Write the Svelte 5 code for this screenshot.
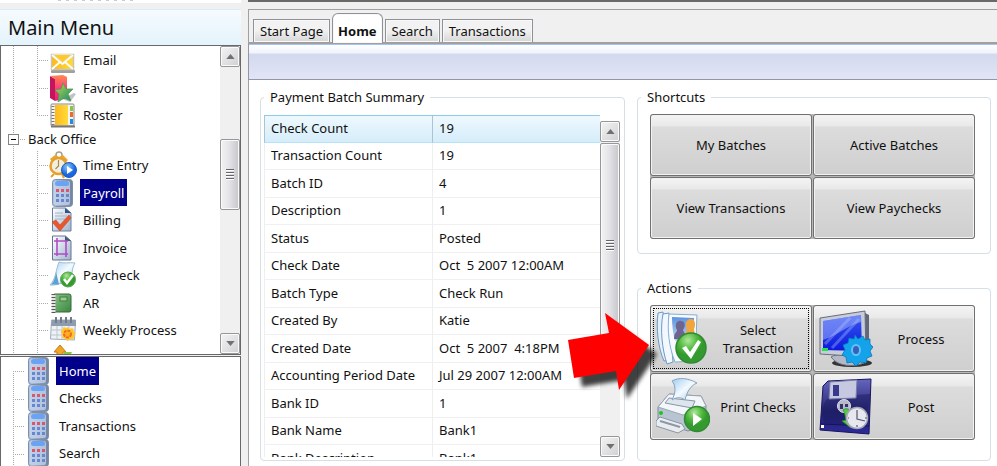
<script>
  let activeTab = $state('Home');
  let activeMenu = $state('Payroll');
  let activePage = $state('Home');

  const frontOffice = [
    { label: 'Email', icon: 'email' },
    { label: 'Favorites', icon: 'favorites' },
    { label: 'Roster', icon: 'roster' }
  ];

  const backOffice = [
    { label: 'Time Entry', icon: 'time' },
    { label: 'Payroll', icon: 'calc' },
    { label: 'Billing', icon: 'billing' },
    { label: 'Invoice', icon: 'invoice' },
    { label: 'Paycheck', icon: 'paycheck' },
    { label: 'AR', icon: 'ar' },
    { label: 'Weekly Process', icon: 'weekly' },
    { label: 'Import Export', icon: 'transfer' }
  ];

  const pages = ['Home', 'Checks', 'Transactions', 'Search'];
  const tabs = ['Start Page', 'Home', 'Search', 'Transactions'];

  const summary = [
    ['Check Count', '19'],
    ['Transaction Count', '19'],
    ['Batch ID', '4'],
    ['Description', '1'],
    ['Status', 'Posted'],
    ['Check Date', 'Oct  5 2007 12:00AM'],
    ['Batch Type', 'Check Run'],
    ['Created By', 'Katie'],
    ['Created Date', 'Oct  5 2007  4:18PM'],
    ['Accounting Period Date', 'Jul 29 2007 12:00AM'],
    ['Bank ID', '1'],
    ['Bank Name', 'Bank1'],
    ['Bank Description', 'Bank1']
  ];

  const shortcuts = ['My Batches', 'Active Batches', 'View Transactions', 'View Paychecks'];

  const actions = [
    { label: 'Select Transaction', icon: 'select' },
    { label: 'Process', icon: 'process' },
    { label: 'Print Checks', icon: 'print' },
    { label: 'Post', icon: 'post' }
  ];
</script>

{#snippet smallIcon(name)}
  <svg class="small-icon" viewBox="0 0 28 28" aria-hidden="true">
    {#if name === 'email'}
      <rect x="2" y="24" width="24" height="3" rx="1" fill="#777" opacity=".7" />
      <rect x="2.500" y="8.500" width="22" height="15" fill="url(#gold)" stroke="#c9c4b4" stroke-width="1.500" />
      <path d="M3 9l10.500 9L24 9M3 23l8-7M24 23l-8-7" fill="none" stroke="#fff" stroke-width="1.800" />
      <path d="M4 8.500h19l-9.500 8z" fill="#ffc928" stroke="#e8e2cf" />
    {:else if name === 'favorites'}
      <path d="M1 2l5 3v22l-5-3z" fill="#c4155c" />
      <path d="M1 2l13-1 4 2v21L6 27V5z" fill="url(#folder)" />
      <path d="M13 25l12-6 2 1-6 8z" fill="#888" opacity=".5" />
      <path d="M14 9l3 6 7 0-5 5 3 7-7-3-6 4 1-8-4-4 6-1z" fill="url(#star)" stroke="#4f9a55" stroke-width=".8" />
    {:else if name === 'roster'}
      <rect x="2" y="3" width="23" height="22" rx="1" fill="#f4f4f4" stroke="#888" />
      <path d="M2 25.500h24" stroke="#777" stroke-width="2" />
      <rect x="6" y="4" width="13" height="20" fill="url(#gold)" />
      <path d="M4 5v19" stroke="#777" stroke-width="3" stroke-dasharray="1 2" />
      <rect x="21" y="5" width="3" height="5" fill="#8cc63e" />
      <rect x="21" y="11" width="3" height="5" fill="#f06a28" />
      <rect x="21" y="18" width="3" height="5" fill="#1d8fe0" />
    {:else if name === 'time'}
      <circle cx="10" cy="4" r="3" fill="none" stroke="#a9a08c" stroke-width="1.500" />
      <path d="M1 8l5-4 4 2 4-2 5 5-3 3H4z" fill="#eba42c" />
      <circle cx="9.500" cy="15" r="8" fill="#f3efdf" stroke="#e6a02b" stroke-width="2.500" />
      <path d="M9.500 9v6l-3 3" stroke="#a98b4c" stroke-width="1.200" fill="none" />
      <path d="M5 23l-3 3M13 23l2 4" stroke="#e6a02b" stroke-width="2" />
      <circle cx="20" cy="19" r="7.500" fill="url(#blueball)" stroke="#1c5cc0" />
      <path d="M18 15l6 4-6 4z" fill="#fff" />
    {:else if name === 'calc'}
      <rect x="3.500" y=".5" width="20" height="27" rx="3" fill="url(#calcbody)" stroke="#7f8fa8" />
      <rect x="5" y="2" width="16" height="24" rx="2" fill="#c9d8f0" opacity=".7" />
      <rect x="6" y="2" width="14" height="5" rx="2.500" fill="#6aa2f4" />
      <path d="M7 11.500h3M12 11.500h3M17 11.500h3" stroke="#d9566b" stroke-width="3" />
      <path d="M7 16.500h3M12 16.500h3M17 16.500h3M7 21.500h3M12 21.500h3M17 21.500h3" stroke="#6788cf" stroke-width="3" />
    {:else if name === 'billing'}
      <path d="M3.500 2h13l5.500 5v18H3.500z" fill="url(#paper)" stroke="#68809f" />
      <path d="M16 2v5h6z" fill="#2c5384" />
      <path d="M6 7h8M6 10h12M6 13h12" stroke="#a1b4cc" />
      <path d="M3 16l4-2 4 5L20 9l2 3-11 13z" fill="#e9572d" stroke="#c84a26" stroke-width=".6" />
    {:else if name === 'invoice'}
      <path d="M3.500 2h13l5.500 5v19H3.500z" fill="url(#paper)" stroke="#66758e" />
      <path d="M16 2v5h6z" fill="#445a7b" />
      <path d="M8 4v18M17 7v16M5 7h14M5 20h14" stroke="#b04cc4" stroke-width="1.600" fill="none" />
    {:else if name === 'paycheck'}
      <path d="M10 1c5 2 10 0 16 1-4 6-2 13-5 20-6-3-11 3-20 2C7 18 7 8 10 1z" fill="url(#check)" stroke="#9bbdd6" />
      <path d="M2 23.500c3-3 5-8 5-13l3 13z" fill="#5f9fd2" />
      <circle cx="19" cy="18.500" r="7.500" fill="url(#green)" stroke="#5aa558" />
      <path d="M15 18l3 4 6-8" fill="none" stroke="#fff" stroke-width="2.500" />
    {:else if name === 'ar'}
      <rect x="4" y="5" width="18" height="18" rx="2" fill="url(#book)" stroke="#35683a" />
      <path d="M4.500 5v19" stroke="#e5e5e5" stroke-width="4" />
      <path d="M4.500 5v19" stroke="#555" stroke-width="4" stroke-dasharray="1 2" />
      <rect x="11" y="8" width="7" height="4" fill="#9ccb92" stroke="#3f7d42" />
    {:else if name === 'weekly'}
      <path d="M2.500 4h24l-1 20-24-1z" fill="#eef2f6" stroke="#a3aebb" />
      <path d="M3 4h24v6H2z" fill="#8f9cad" />
      <path d="M7 1v6M12 1v6M17 1v6M22 1v6" stroke="#6f7c8d" stroke-width="2" />
      <path d="M2 14h24M2 19h24M8 10v13M13 10v13M20 10v13" stroke="#bcc6d2" />
      <path d="M18.500 11l2 2 3-1 1 3 2 2-1 3-1 3-3 0-3 2-2-2-3-1 0-3-2-3 2-2 1-3 3 1z" fill="#ffc828" />
      <circle cx="18.500" cy="18" r="3.500" fill="#ffb21c" stroke="#f2662a" stroke-width="2" stroke-dasharray="3 1" />
    {:else if name === 'transfer'}
      <path d="M11 1l6 7h-3v8H8V8H5z" fill="#efa525" stroke="#c67b12" />
      <path d="M19 17l-5-9h9z" fill="#8bc540" />
    {/if}
  </svg>
{/snippet}

{#snippet largeIcon(name)}
  <svg class="large-icon" viewBox="0 0 54 58" aria-hidden="true">
    {#if name === 'select'}
      <path d="M2 3l5-1 5 48-4 1C2 38 0 18 2 3z" fill="#e4f0fb" stroke="#6d9ac5" />
      <path d="M7 4l6-1 4 49-6 2C6 39 4 19 7 4z" fill="#f2f8fe" stroke="#6d9ac5" />
      <path d="M13 4l28 1c-1 16-1 32 2 46l-24 1C13 37 11 20 13 4z" fill="#f7fbff" stroke="#88aed0" />
      <path d="M16 7l22 1-1 24-18-1C17 24 16 15 16 7z" fill="url(#photo)" />
      <path d="M18 29c0-7 3-6 3-9-3-5 0-10 4-9 4 0 5 5 2 9 1 3 4 4 3 10z" fill="#6f6490" />
      <path d="M29 26c0-4 2-5 2-7-3-5 0-11 4-10 4 0 5 6 3 10 0 2 1 4 1 7z" fill="#f1a53d" />
      <circle cx="35" cy="38" r="15" fill="url(#green)" stroke="#2f8b32" stroke-width="1.500" />
      <path d="M26 38l4-2 4 6 8-12 3 2-10 17z" fill="#fff" />
    {:else if name === 'print'}
      <path d="M2 29l11-13 32 2 5 10-1 19-17 6L2 43z" fill="#b8c4d2" stroke="#818b96" />
      <path d="M2 29l11-13 32 2 5 10-23 9z" fill="#f3f7fb" stroke="#9aa5b1" />
      <path d="M9 25l4-5 26 3-3 7z" fill="#dde5ed" stroke="#8996a4" />
      <path d="M16 3c7-4 16-3 25 2-7 3-10 9-12 17-4-3-9-3-13 0 4-8 4-14 0-19z" fill="url(#check)" stroke="#86a3bb" />
      <path d="M0 43l4-4 22 7 3 5-7 4L0 48z" fill="#e9edf2" stroke="#8a95a1" />
      <path d="M4 43l20 6" stroke="#8d98a4" stroke-width="2" />
      <circle cx="5" cy="35" r="2" fill="#18c91f" />
      <circle cx="41" cy="41" r="12.500" fill="url(#green)" stroke="#2f8b32" stroke-width="1.500" />
      <path d="M37 35l9 6-9 7z" fill="#fff" />
    {:else if name === 'process'}
      <ellipse cx="33" cy="53" rx="20" ry="4" fill="#333" />
      <path d="M12 47c6-4 16-1 20-6l13 3v9c-10 4-26 4-33-6z" fill="#b4b9c8" stroke="#6f7484" />
      <path d="M44 2l6 3v40l-5 1z" fill="#62677a" />
      <path d="M1 8L46 1l1 46L1 44z" fill="#c8ccd8" stroke="#686d7d" />
      <path d="M4 11l38-6 1 36-39-1z" fill="url(#screen)" />
      <path d="M4 11l38-6v7C27 16 19 25 4 30z" fill="#a7b8ff" opacity=".5" />
      <path d="M13 38L40 9M6 34L31 8" stroke="#b7c5ff" opacity=".35" stroke-width="3" />
      <rect x="3" y="38" width="6" height="3" fill="#28df50" />
      <path d="M36 25l3 4 5-3 2 4 5-1 0 5 3 3-3 4 2 5-5 2-1 5-6-1-4 4-4-4-5 1-1-6-4-2 3-5-2-5 5-2 1-5 5 1z" fill="#14a3ea" stroke="#0878bd" stroke-width=".8" />
      <ellipse cx="37" cy="40" rx="4" ry="5" fill="#3b5fb8" stroke="#5cc4fa" stroke-width="2" />
    {:else if name === 'post'}
      <path d="M4 8l5-5 43-2-2 55-49-4z" fill="url(#floppy)" stroke="#18155e" />
      <path d="M51 16c0 16-6 27-19 30H6c-6-15 0-27 8-28l22-1z" fill="#1a1960" opacity=".5" />
      <path d="M11 4l27-2-1 18-27 1z" fill="#c6c9df" stroke="#777ba5" />
      <path d="M14 7h6v11h-6z" fill="#39398d" />
      <path d="M2 46l48 2" stroke="#15144e" />
      <circle cx="25" cy="28" r="6.500" fill="#b7b9cb" stroke="#e2e2eb" />
      <path d="M21 26h3v5h-3zM26 26h3v3h-3z" fill="#333270" />
      <path d="M24 32c6-4 9 2 8 9l5-1-5 10-9-7 4-1c-1-4-1-7-3-10z" fill="#58c845" stroke="#268c2b" stroke-width=".8" />
      <circle cx="38" cy="40" r="10.500" fill="#e7e7ef" stroke="#a5a8b5" stroke-width="1.500" />
      <path d="M38 32v9l8 2M38 47v2M30 40h-1M46 40h2" stroke="#55586a" stroke-width="1.200" fill="none" />
      <rect x="2" y="47" width="3" height="3" fill="#fff" />
    {/if}
  </svg>
{/snippet}

{#snippet treeItem(item)}
  <li>
    <a href="#{item.icon}" class:selected={activeMenu === item.label} onclick={() => (activeMenu = item.label)}>
      {@render smallIcon(item.icon)}
      <span>{item.label}</span>
    </a>
  </li>
{/snippet}

{#snippet scrollbar(kind)}
  <div class="scrollbar {kind}">
    <button aria-label="Scroll up"><svg viewBox="0 0 10 6"><path d="M0 6l5-6 5 6z" /></svg></button>
    <div class="track"><div class="thumb"><i></i></div></div>
    <button aria-label="Scroll down"><svg viewBox="0 0 10 6"><path d="M0 0l5 6 5-6z" /></svg></button>
  </div>
{/snippet}

<svg class="defs" aria-hidden="true">
  <defs>
    <linearGradient id="gold"><stop stop-color="#ffb81b" /><stop offset="1" stop-color="#ffdb3a" /></linearGradient>
    <linearGradient id="folder" x2="0" y2="1"><stop stop-color="#ff8a4d" /><stop offset=".5" stop-color="#ff3f78" /><stop offset="1" stop-color="#e32274" /></linearGradient>
    <linearGradient id="star" x2="1" y2="1"><stop stop-color="#c6d846" /><stop offset="1" stop-color="#078a72" /></linearGradient>
    <radialGradient id="blueball" cx=".4" cy=".3"><stop stop-color="#8cc8ff" /><stop offset="1" stop-color="#1967dc" /></radialGradient>
    <linearGradient id="calcbody"><stop stop-color="#b4c6e3" /><stop offset="1" stop-color="#72839f" /></linearGradient>
    <linearGradient id="paper" x2="1" y2="1"><stop stop-color="#fff" /><stop offset="1" stop-color="#9fb3cf" /></linearGradient>
    <linearGradient id="check" x2="1" y2="1"><stop stop-color="#9fcdf0" /><stop offset=".5" stop-color="#f4faff" /><stop offset="1" stop-color="#a3c7e2" /></linearGradient>
    <radialGradient id="green" cx=".4" cy=".25"><stop stop-color="#b0e89c" /><stop offset=".6" stop-color="#52b93f" /><stop offset="1" stop-color="#349a30" /></radialGradient>
    <linearGradient id="book" x2="1" y2="1"><stop stop-color="#8bc488" /><stop offset="1" stop-color="#3a8740" /></linearGradient>
    <linearGradient id="photo" x2="0" y2="1"><stop stop-color="#5d92dd" /><stop offset="1" stop-color="#c3dcf6" /></linearGradient>
    <linearGradient id="screen" x2="0" y2="1"><stop stop-color="#3558f0" /><stop offset="1" stop-color="#0a18dc" /></linearGradient>
    <linearGradient id="floppy" x2="0" y2="1"><stop stop-color="#6665c0" /><stop offset=".6" stop-color="#24236f" /><stop offset="1" stop-color="#2c2a9d" /></linearGradient>
  </defs>
</svg>

<div class="app">
  <aside>
    <div class="logo-strip"></div>
    <h1>Main Menu</h1>
    <nav class="pane tree" aria-label="Main menu">
      <div class="tree-body">
        <ul>
          {#each frontOffice as item (item.label)}
            {@render treeItem(item)}
          {/each}
        </ul>
        <div class="branch">
          <button class="expander" aria-label="Collapse Back Office"></button>
          <span>Back Office</span>
        </div>
        <ul class="open">
          {#each backOffice as item (item.label)}
            {@render treeItem(item)}
          {/each}
        </ul>
      </div>
      {@render scrollbar('menu-scroll')}
    </nav>
    <nav class="pane pages" aria-label="Pages">
      <ul class="open">
        {#each pages as page (page)}
          <li>
            <a href="#{page}" class:selected={activePage === page} onclick={() => (activePage = page)}>
              {@render smallIcon('calc')}
              <span>{page}</span>
            </a>
          </li>
        {/each}
      </ul>
    </nav>
  </aside>

  <main>
    <div class="tabs" role="tablist">
      {#each tabs as tab (tab)}
        <button role="tab" aria-selected={activeTab === tab} class:active={activeTab === tab} onclick={() => (activeTab = tab)}>{tab}</button>
      {/each}
    </div>
    <div class="toolbar"></div>

    <div class="content">
      <fieldset class="summary">
        <legend>Payment Batch Summary</legend>
        <div class="list-view">
          <div class="table-wrap">
            <table>
              <tbody>
                {#each summary as [name, value], i (name)}
                  <tr class:current={i === 0}>
                    <th scope="row">{name}</th>
                    <td>{value}</td>
                  </tr>
                {/each}
              </tbody>
            </table>
          </div>
          {@render scrollbar('table-scroll')}
        </div>
      </fieldset>

      <div class="side">
        <fieldset class="shortcuts">
          <legend>Shortcuts</legend>
          <div class="button-grid">
            {#each shortcuts as label (label)}
              <button class="tile">{label}</button>
            {/each}
          </div>
        </fieldset>

        <fieldset class="actions">
          <legend>Actions</legend>
          <div class="button-grid">
            {#each actions as action, i (action.label)}
              <button class="tile" class:focused={i === 0}>
                {@render largeIcon(action.icon)}
                <span>{action.label}</span>
              </button>
            {/each}
            <svg class="pointer" viewBox="0 0 100 100" aria-hidden="true">
              <path d="M8 35l41-7-4-20 44 32-30 45-3-19-42 7z" fill="#f00" />
            </svg>
          </div>
        </fieldset>
      </div>
    </div>
  </main>
</div>

<style>
  :global(body) {
    background: #f0f0f0;
  }

  * {
    box-sizing: border-box;
  }

  .defs {
    position: absolute;
    width: 0;
    height: 0;
  }

  .app {
    display: flex;
    height: 100vh;
    overflow: hidden;
    background: #f0f0f0;
    font-family: 'Noto Sans', 'Open Sans', sans-serif;
    font-size: 13px;
    line-height: 18px;
    color: #111;
  }

  button {
    font: inherit;
    color: inherit;
  }

  ul {
    margin: 0;
    padding: 0;
    list-style: none;
  }

  /* Left side */
  aside {
    display: flex;
    flex-direction: column;
    width: 241px;
    flex: none;
  }

  .logo-strip {
    height: 3px;
    margin-bottom: 6px;
    background: repeating-linear-gradient(90deg, #ccc 0 3px, #fff 3px 8px) 58px 0 / 76px 1px no-repeat #fff;
  }

  h1 {
    margin: 0;
    height: 36px;
    padding-left: 8px;
    border-top: 1px solid #d5eefb;
    background: linear-gradient(#f6fbfe, #e4f3fc);
    font-size: 20px;
    font-weight: 400;
    line-height: 35px;
  }

  .pane {
    display: flex;
    border: 1px solid #686868;
    background: #fff;
    overflow: hidden;
  }

  .tree {
    flex: 310 1 0;
  }

  .pages {
    flex: 110 1 0;
    margin-top: 1px;
    border-bottom: 0;
  }

  .tree-body {
    flex: 1;
    background: linear-gradient(#aaa 1px, transparent 1px) 12px 0 / 1px 2px repeat-y;
  }

  li {
    height: 28px;
    background:
      linear-gradient(#aaa 1px, transparent 1px) 36px 0 / 1px 2px repeat-y,
      repeating-linear-gradient(90deg, #aaa 0 1px, transparent 1px 2px) 36px 14px / 12px 1px no-repeat;
  }

  li:nth-child(even) {
    height: 27px;
  }

  ul:not(.open) li:last-child {
    background:
      repeating-linear-gradient(#aaa 0 1px, transparent 1px 2px) 36px 0 / 1px 14px no-repeat,
      repeating-linear-gradient(90deg, #aaa 0 1px, transparent 1px 2px) 36px 14px / 12px 1px no-repeat;
  }

  .tree a,
  .pages a {
    display: flex;
    align-items: center;
    height: 100%;
    padding-left: 48px;
    color: inherit;
    text-decoration: none;
  }

  a span {
    display: flex;
    align-items: center;
    height: 100%;
    margin-left: 3px;
    padding: 0 3px;
  }

  a.selected span {
    background: #00008b;
    color: #fff;
  }

  .small-icon {
    width: 28px;
    height: 28px;
    flex: none;
  }

  .branch {
    display: flex;
    align-items: center;
    height: 22px;
    padding: 0 0 2px 7px;
  }

  .branch span {
    padding-left: 9px;
    background: repeating-linear-gradient(90deg, #aaa 0 1px, transparent 1px 2px) 1px 9px / 6px 1px no-repeat;
  }

  .expander {
    width: 11px;
    height: 11px;
    padding: 0;
    border: 1px solid #848484;
    background: linear-gradient(#000, #000) center / 5px 1px no-repeat #fff;
  }

  .pages li {
    background:
      linear-gradient(#aaa 1px, transparent 1px) 12px 0 / 1px 2px repeat-y,
      repeating-linear-gradient(90deg, #aaa 0 1px, transparent 1px 2px) 12px 14px / 12px 1px no-repeat;
  }

  .pages li:first-child {
    background:
      repeating-linear-gradient(#aaa 0 1px, transparent 1px 2px) 12px 14px / 1px 14px no-repeat,
      repeating-linear-gradient(90deg, #aaa 0 1px, transparent 1px 2px) 12px 14px / 12px 1px no-repeat;
  }

  .pages a {
    padding-left: 24px;
  }

  /* Scrollbars */
  .scrollbar {
    display: flex;
    flex-direction: column;
    width: 20px;
    flex: none;
    background: #f0f0f0;
  }

  .scrollbar button,
  .thumb {
    display: grid;
    place-items: center;
    border: 1px solid #979797;
    border-radius: 2px;
    background: linear-gradient(90deg, #f3f3f3, #e4e4e8 45%, #c6c6ca);
    box-shadow: inset 0 0 0 1px #fafafa;
  }

  .scrollbar button {
    height: 21px;
    padding: 0;
    flex: none;
    background: linear-gradient(135deg, #f4f4f4, #d0d0d4);
  }

  .scrollbar svg {
    width: 9px;
    height: 5px;
    fill: #707070;
  }

  .track {
    display: flex;
    flex-direction: column;
    flex: 1;
  }

  .thumb i {
    width: 8px;
    height: 11px;
    background: repeating-linear-gradient(#666 0 1px, #fff 1px 2px, transparent 2px 3px);
  }

  .menu-scroll .thumb {
    height: 71px;
    margin-top: 72px;
  }

  .table-scroll .thumb {
    height: 205px;
    margin-top: 1px;
  }

  /* Right side */
  main {
    display: flex;
    flex-direction: column;
    flex: 1;
    min-width: 0;
    margin-left: 7px;
    border-top: 2px solid #696969;
  }

  .tabs {
    display: flex;
    align-items: flex-end;
    gap: 2px;
    height: 35px;
    margin-top: 7px;
    padding-left: 4px;
    border: solid #a0a0a0;
    border-width: 1px 0 2px 1px;
  }

  .tabs button {
    height: 23px;
    padding: 0 6px;
    border: 1px solid #8e9298;
    border-bottom: 0;
    background: linear-gradient(#f2f2f2 45%, #d6d6d6);
    box-shadow: inset 0 0 0 1px #f8f8f8;
    white-space: nowrap;
    line-height: 20px;
  }

  .tabs button.active {
    height: 30px;
    margin-bottom: -1px;
    padding: 4px 5px 0;
    border-radius: 6px 6px 0 0;
    background: #fff;
    font-weight: 700;
    line-height: 22px;
  }

  .toolbar {
    height: 36px;
    border: solid #9296a6;
    border-width: 0 0 1px 1px;
    background: linear-gradient(#a3c3f5 0 1px, #fff 1px, #f1f3fb 25%, #d3d9ee 30%, #e1e5f6);
  }

  .content {
    display: grid;
    grid-template-columns: minmax(0, 365fr) minmax(0, 354fr);
    gap: 12px;
    flex: 1;
    min-height: 0;
    padding: 8px 6px 5px 11px;
    border-left: 1px solid #a0a0a0;
    background: #fff;
  }

  fieldset {
    min-width: 0;
    margin: 0;
    border: 1px solid #d5dfe5;
    border-radius: 4px;
  }

  legend {
    height: 18px;
    padding: 0 6px;
  }

  .summary {
    display: flex;
    min-height: 0;
    padding: 9px 4px 3px 3px;
  }

  .list-view {
    display: flex;
    flex: 1;
    min-width: 0;
    min-height: 0;
  }

  .table-wrap {
    flex: 1;
    min-width: 0;
    overflow: hidden;
  }

  .table-scroll {
    margin-top: 6px;
  }

  table {
    width: 100%;
    border-collapse: separate;
    border-spacing: 0;
    table-layout: fixed;
  }

  th,
  td {
    height: 28px;
    padding: 0 6px 2px;
    border-bottom: 1px solid #f0f0f0;
    border-left: 1px solid #eee;
    font-weight: 400;
    text-align: left;
    white-space: pre;
  }

  tr:nth-child(even) > * {
    height: 27px;
  }

  .current > * {
    border-top: 1px solid #8ccbe8;
    border-bottom-color: #b6e3f7;
    border-left-color: #a9c4d2;
    background: linear-gradient(#eef8fe, #d5edfa);
  }

  .side {
    display: flex;
    flex-direction: column;
    gap: 25px;
  }

  .side fieldset {
    padding: 8px 15px 14px 12px;
  }

  .side legend {
    margin-left: -9px;
  }

  .side .actions {
    padding-bottom: 20px;
  }

  .button-grid {
    position: relative;
    display: grid;
    grid-template-columns: 1fr 1fr;
    gap: 1px;
    background: #b8b8b8;
    border-radius: 3px;
  }

  .tile {
    display: flex;
    align-items: center;
    justify-content: center;
    min-height: 62px;
    padding: 0 5px;
    border: 1px solid #707070;
    border-radius: 3px;
    background: linear-gradient(#f4f4f4, #e9e9e9 18%, #dcdcdc 20%, #cfcfcf);
    box-shadow: inset 0 0 0 1px #f2f2f2;
  }

  .actions .tile {
    min-height: 67px;
  }

  .tile span {
    flex: 1;
    padding: 0 4px;
  }

  .tile.focused {
    outline: 1px dotted #000;
    outline-offset: -4px;
  }

  .large-icon {
    width: 54px;
    height: 58px;
    flex: none;
  }

  /* Red arrow over the batch list, pointing at the first action */
  .pointer {
    position: absolute;
    top: 0;
    left: -90px;
    width: 100px;
    height: 100px;
    overflow: visible;
    filter: drop-shadow(8px 9px 2px rgba(0, 0, 0, 0.75));
    pointer-events: none;
  }
</style>
